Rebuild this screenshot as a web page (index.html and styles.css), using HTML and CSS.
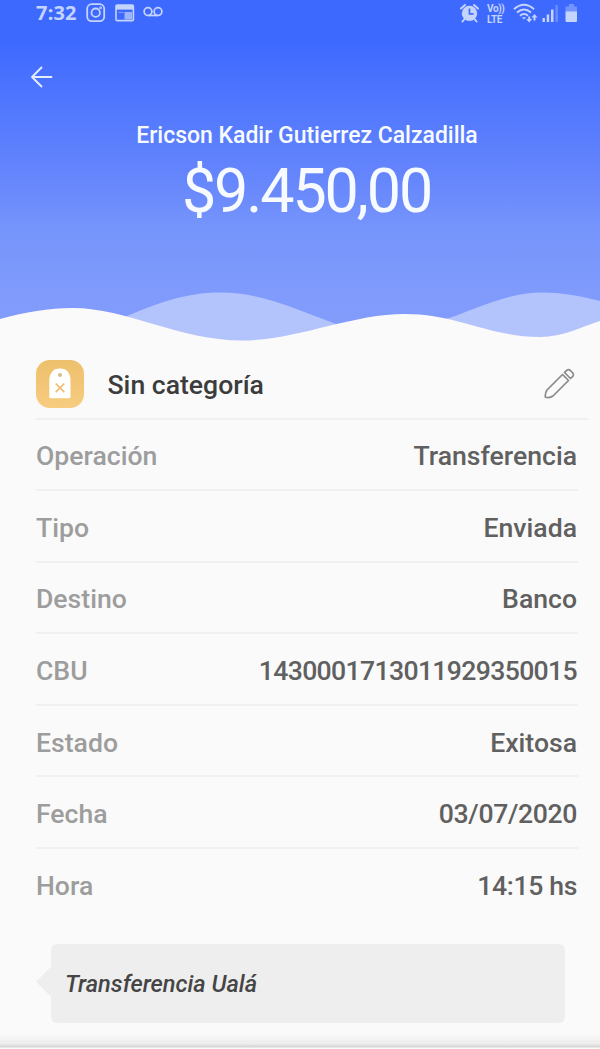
FILE: index.html
```html
<!DOCTYPE html>
<html lang="es">
<head>
<meta charset="utf-8">
<title>Transferencia</title>
<link rel="stylesheet" href="styles.css">
</head>
<body>
<main class="screen">
  <header class="hero">
    <div class="status">
      <div class="status-left">
        <span class="clock">7:32</span>
        <svg class="ico-insta" width="20" height="20" viewBox="0 0 20 20" fill="none" stroke="currentColor" stroke-width="1.8"><rect x="1.2" y="1.2" width="17" height="17" rx="4.5"/><circle cx="9.7" cy="9.7" r="4.2"/><circle cx="14.6" cy="4.8" r=".5"/></svg>
        <svg class="ico-card" width="20" height="18" viewBox="0 0 20 18"><rect x="1" y="1" width="17.4" height="15.6" rx="1.2" fill="none" stroke="currentColor" stroke-width="1.6"/><path d="M1 1h17.4v4.6H1z" fill="currentColor"/><path d="M9.500 8h7.500v7.500H9.500z" fill="currentColor" opacity=".7"/><path d="M3.500 8.500h5" stroke="currentColor" opacity=".5"/></svg>
        <svg class="ico-voice" width="20" height="12" viewBox="0 0 20 12" fill="none" stroke="currentColor" stroke-width="1.7"><circle cx="5" cy="5.600" r="3.900"/><circle cx="15" cy="5.600" r="3.900"/><path d="M5 9.500h10"/></svg>
      </div>
      <div class="status-right">
        <svg class="ico-alarm" width="20" height="20" viewBox="0 0 20 20"><circle cx="9.500" cy="10.400" r="7.700" fill="currentColor"/><path d="M1 5.500 5 2M14 2l4 3.500M4.500 16l-2 2.500M14.500 16l2 2.500" stroke="currentColor" stroke-width="2" stroke-linecap="round"/><path d="M9.500 5.600v5.200h4" fill="none" stroke="#416bf8" stroke-width="1.7"/></svg>
        <div class="volte">Vo))<br>LTE</div>
        <svg class="ico-wifi" width="25" height="21" viewBox="0 0 25 21" fill="none" stroke="currentColor" stroke-width="1.900"><path d="M1 6.200Q11 -2.500 21 6.200M4 9.500Q11 3.300 18 9.500M7 12.700Q11 9.300 15 12.700"/><path d="M8.800 14.300h4.400L11 16.600z" fill="currentColor" stroke="none"/><path d="M15.200 13.500h2v2.500h2l-3 3.500-3-3.500h2zM20.500 17.500h2v-3h2l-3-3.500-3 3.500h2z" fill="currentColor" stroke="none"/></svg>
        <svg class="ico-signal" width="17" height="19" viewBox="0 0 17 19" fill="currentColor"><path d="M.5 14h2.400v4H.5zM4.700 10.500h2.500V18H4.700zM9 5.500h2.500V18H9z"/><path d="M13.500 1h2.300v17h-2.300z" opacity=".35"/></svg>
        <svg class="ico-battery" width="13" height="20" viewBox="0 0 13 20" fill="currentColor"><path d="M4 1h5v2.500h3V9H.5V3.500H4z" opacity=".4"/><path d="M.5 8.500H12V18q0 1-1 1H1.500q-1 0-1-1z"/></svg>
      </div>
    </div>
    <svg class="back" width="24" height="24" viewBox="0 0 24 24" fill="none" stroke="currentColor" stroke-width="1.900" stroke-linecap="round" stroke-linejoin="round"><path d="M21.500 12H2M11.500 2.500 2 12l9.500 9.500"/></svg>
    <h1 class="name">Ericson Kadir Gutierrez Calzadilla</h1>
    <p class="amount">$9.450,00</p>
    <svg class="waves" width="600" height="60" viewBox="0 0 600 60"><path d="M120 29C158 13 185 2.500 220 2.500C266 2.500 300 22 345 37L345 60H120ZM440 31C475 20 505 2.500 542 2.500C565 2.500 584 7 600 11V60H440Z" fill="#b3c3fc"/><path d="M0 29C26 22 48 18 73 18C126 18 180 50.500 242 50.500C297 50.500 350 24 405 24C457 24 490 47 540 47C564 47 580 37 600 31V60H0Z" fill="#fafafa"/></svg>
  </header>
  <section class="details">
    <div class="category">
      <svg class="tag" width="48" height="48" viewBox="0 0 48 48"><defs><linearGradient id="gold" x2="0" y2="1"><stop stop-color="#edc06c"/><stop offset="1" stop-color="#f8cc80"/></linearGradient></defs><rect width="48" height="48" rx="14" fill="url(#gold)"/><path d="M18.500 9.500Q24 7.500 29.500 9.500Q34 13 34.500 19V37q0 1.200-1.200 1.200H14.500q-1.200 0-1.200-1.200V19Q14 13 18.500 9.500Z" fill="#fff"/><circle cx="24" cy="15" r="2" fill="#d9bd8c"/><path d="m19.700 23.500 8.600 8.600m0-8.600-8.600 8.600" stroke="#eebd6f" stroke-width="1.700"/></svg>
      <h2>Sin categoría</h2>
      <svg class="pencil" width="32" height="32" viewBox="0 0 32 32" fill="none" stroke="currentColor" stroke-width="1.700" stroke-linejoin="round"><path d="M19.500 6.500 4 22Q1.800 25.300 2.400 29.200Q6.500 30.500 10 28L25.500 12.500ZM21.500 4.500 24 2.200Q25.700 .9 27.500 2.700L29.800 5Q31 7 29.800 8.300L27.500 10.500Z"/></svg>
    </div>
    <dl class="rows">
      <div class="row"><dt>Operación</dt><dd>Transferencia</dd></div>
      <div class="row"><dt>Tipo</dt><dd>Enviada</dd></div>
      <div class="row"><dt>Destino</dt><dd>Banco</dd></div>
      <div class="row"><dt>CBU</dt><dd class="cbu">1430001713011929350015</dd></div>
      <div class="row"><dt>Estado</dt><dd>Exitosa</dd></div>
      <div class="row"><dt>Fecha</dt><dd class="date">03/07/2020</dd></div>
      <div class="row"><dt>Hora</dt><dd class="date">14:15 hs</dd></div>
    </dl>
    <div class="note">Transferencia Ualá</div>
  </section>
  <div class="bottom-edge"></div>
</main>
</body>
</html>
```
FILE: styles.css
```css
* { box-sizing: border-box; }
body, h1, h2, p, dl, dd { margin: 0; }
body { background: #fafafa; font-family: Roboto, sans-serif; }
.screen { width: 600px; height: 1049px; display: flex; flex-direction: column; overflow: hidden; }
.hero { height: 350px; flex: none; display: flex; flex-direction: column; color: #f7fbff; background: linear-gradient(#3e69ff 0, #3e69ff 40px, #4c74fe 90px, #6686fc 180px, #7695fc 230px, #809bfb 300px, #829dfb 350px); }
.status { height: 40px; flex: none; display: flex; justify-content: space-between; padding: 2px 22px 0 36px; color: #c4d4fd; }
.status-left, .status-right { display: flex; align-items: flex-start; }
.clock { width: 50px; font: 700 20px/22px "Noto Sans", sans-serif; letter-spacing: .2px; }
.ico-insta { margin-top: 1px; }
.ico-card { margin: 2px 0 0 9px; }
.ico-voice { margin: 4px 0 0 8px; }
.ico-alarm { margin-top: 1px; }
.volte { width: 20px; margin: 1px 0 0 7px; font: 700 10px/11px Roboto, sans-serif; letter-spacing: -.4px; }
.ico-wifi { margin: 1px 0 0 6px; }
.ico-signal { margin: 2px 0 0 4px; }
.ico-battery { margin: 1px 0 0 6px; }
.back { margin: 25px 0 0 30px; flex: none; color: #e3edff; }
.name { margin-top: 32px; padding-left: 14px; text-align: center; font-size: 23px; line-height: 29px; font-weight: 500; letter-spacing: -.02px; white-space: nowrap; }
.amount { margin-top: 4px; padding-left: 13px; text-align: center; font-size: 61px; line-height: 74px; font-weight: 400; letter-spacing: -2.100px; }
.waves { margin-top: auto; display: block; flex: none; }
.details { padding-left: 36px; }
.category { height: 69.500px; width: 552px; display: flex; align-items: flex-start; border-bottom: 2px solid #f0f0f0; padding-top: 10px; }
.tag { margin-left: -.500px; flex: none; }
.category h2 { margin-left: 24px; font-size: 26.600px; line-height: 50px; font-weight: 500; color: #3c3c3c; }
.pencil { margin: 8px 13px 0 auto; color: #8b8b8b; }
.rows { width: 542px; }
.row { height: 71.600px; display: flex; justify-content: space-between; align-items: center; padding: 3px 1px 0 0; border-bottom: 2px solid #f0f0f0; font-size: 26.600px; font-weight: 500; }
.row:last-child { border-bottom-color: transparent; }
.row dt { color: #9d9d9d; }
.row dd { color: #606060; }
.row .cbu { letter-spacing: -.650px; }
.row .date { letter-spacing: -.350px; }
.note { position: relative; width: 514px; height: 79px; margin: 23px 0 0 15px; padding-left: 14px; border-radius: 6px; background: #eee; color: #454545; font-size: 23.600px; line-height: 81px; font-weight: 500; font-style: italic; }
.note::before { content: ""; position: absolute; left: -15px; top: 23px; width: 15px; height: 30px; background: #eee; clip-path: polygon(0 50%, 100% 0, 100% 100%); }
.bottom-edge { height: 14px; margin-top: auto; margin-bottom: 1px; flex: none; background: linear-gradient(#fafafa, #ededed 70%, #d7d7d7 90%, #f2f2f2); }
```
